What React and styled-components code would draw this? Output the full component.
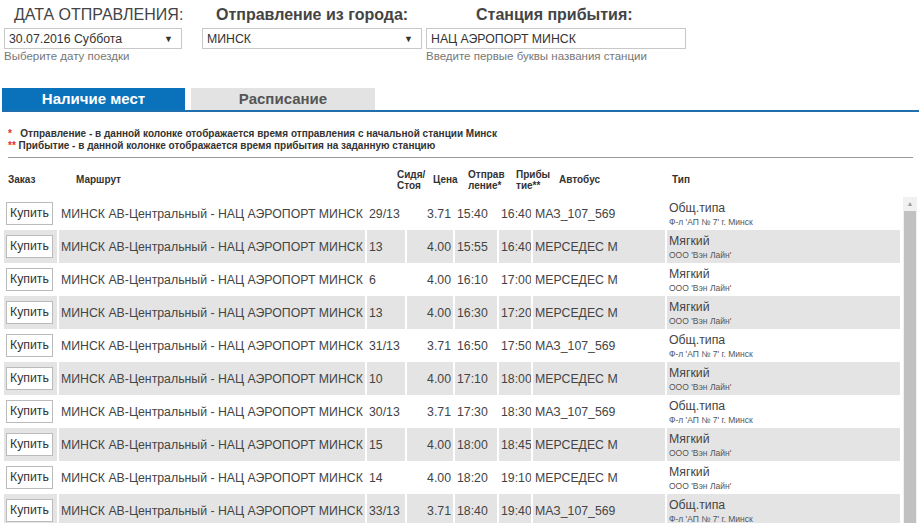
import React from 'react';
import styled, { createGlobalStyle } from 'styled-components';

const Global = createGlobalStyle`
  body { margin: 0; background: #fff; font-family: Arial, 'Liberation Sans', sans-serif; color: #333; }
`;

const Page = styled.div`
  width: 923px; height: 523px; overflow: hidden; position: relative;
`;

const Filters = styled.div`
  display: flex; padding: 4px 0 0 4px; height: 78px;
`;

const Field = styled.div`
  width: ${p => p.$w}px; margin-right: ${p => p.$mr}px;
  display: flex; flex-direction: column;
`;

const Label = styled.div`
  font-size: 16px; font-weight: ${p => (p.$bold ? 'bold' : 'normal')};
  color: #444; padding-left: ${p => p.$pl}px; height: 24px; line-height: 22px;
  white-space: nowrap;
`;

const Select = styled.div`
  height: 19px; border: 1px solid #c8c8c8; background: #fff;
  font-size: 12.3px; color: #333; padding: 0 8px 0 4px;
  display: flex; align-items: center; justify-content: space-between;
  span { font-size: 9px; }
`;

const Hint = styled.div`
  font-size: 11.5px; color: #777; margin-top: 1px; white-space: nowrap;
`;

const Tabs = styled.div`
  display: flex; margin: 6px 4px 0 2px; border-bottom: 2px solid #1f6fae; gap: 6px;
`;

const Tab = styled.div`
  width: ${p => p.$w}px; height: 22px; line-height: 22px; text-align: center;
  font-size: 15px; font-weight: bold;
  background: ${p => (p.$active ? '#0a72ba' : '#e3e3e3')};
  color: ${p => (p.$active ? '#fff' : '#555')};
`;

const Notes = styled.div`
  margin: 16px 10px 0 8px; padding-bottom: 5px; border-bottom: 1px solid #999;
  font-size: 10px; font-weight: bold; color: #333; line-height: 12px;
  b { color: #e03030; }
`;

const Head = styled.div`
  display: grid; grid-template-columns: 68px 321px 36px 35px 48px 43px 113px auto;
  margin: 6px 0 0 8px; height: 31px; align-items: center;
  font-size: 10px; font-weight: bold; color: #333; line-height: 11px;
`;

const Body = styled.div`
  display: flex; margin-top: 2px;
`;

const Rows = styled.div`
  width: 896px; margin-left: 4px;
`;

const Row = styled.div`
  display: grid; grid-template-columns: 53px 306px 38px 46px 42px 32px 132px 1fr;
  gap: 2px; height: 33px;
`;

const Cell = styled.div`
  background: ${p => (p.$gray ? '#e4e4e4' : '#fff')};
  display: flex; flex-direction: column; justify-content: center;
  align-items: ${p => (p.$right ? 'flex-end' : 'flex-start')};
  padding: 0 2px; font-size: 12.3px; color: #444; white-space: nowrap; overflow: hidden;
  small { font-size: 8.5px; color: #555; margin-top: 2px; }
`;

const Buy = styled.div`
  border: 1px solid #bbb; background: #fff; font-size: 12.3px; color: #333;
  height: 21px; line-height: 21px; padding: 0 3px;
`;

const Scroll = styled.div`
  width: 14px; margin-left: 3px; background: #f1f1f1; height: 340px;
  display: flex; flex-direction: column; align-items: center;
`;

const Arrow = styled.div`
  font-size: 7px; color: #a0a0a0; height: 14px; line-height: 14px;
`;

const Thumb = styled.div`
  width: 12px; flex: 1; background: #c1c1c1;
`;

const data = [
  ['29/13', '3.71', '15:40', '16:40', 'МАЗ_107_569', 'Общ.типа', "Ф-л 'АП № 7' г. Минск"],
  ['13', '4.00', '15:55', '16:40', 'МЕРСЕДЕС М', 'Мягкий', "ООО 'Вэн Лайн'"],
  ['6', '4.00', '16:10', '17:00', 'МЕРСЕДЕС М', 'Мягкий', "ООО 'Вэн Лайн'"],
  ['13', '4.00', '16:30', '17:20', 'МЕРСЕДЕС М', 'Мягкий', "ООО 'Вэн Лайн'"],
  ['31/13', '3.71', '16:50', '17:50', 'МАЗ_107_569', 'Общ.типа', "Ф-л 'АП № 7' г. Минск"],
  ['10', '4.00', '17:10', '18:00', 'МЕРСЕДЕС М', 'Мягкий', "ООО 'Вэн Лайн'"],
  ['30/13', '3.71', '17:30', '18:30', 'МАЗ_107_569', 'Общ.типа', "Ф-л 'АП № 7' г. Минск"],
  ['15', '4.00', '18:00', '18:45', 'МЕРСЕДЕС М', 'Мягкий', "ООО 'Вэн Лайн'"],
  ['14', '4.00', '18:20', '19:10', 'МЕРСЕДЕС М', 'Мягкий', "ООО 'Вэн Лайн'"],
  ['33/13', '3.71', '18:40', '19:40', 'МАЗ_107_569', 'Общ.типа', "Ф-л 'АП № 7' г. Минск"],
];

export default function App() {
  return (
    <Page>
      <Global />
      <Filters>
        <Field $w={178} $mr={20}>
          <Label $pl={10}>ДАТА ОТПРАВЛЕНИЯ:</Label>
          <Select>30.07.2016 Суббота<span>▼</span></Select>
          <Hint>Выберите дату поездки</Hint>
        </Field>
        <Field $w={220} $mr={4}>
          <Label $pl={14} $bold>Отправление из города:</Label>
          <Select>МИНСК<span>▼</span></Select>
        </Field>
        <Field $w={260} $mr={0}>
          <Label $pl={50} $bold>Станция прибытия:</Label>
          <Select>НАЦ АЭРОПОРТ МИНСК</Select>
          <Hint>Введите первые буквы названия станции</Hint>
        </Field>
      </Filters>
      <Tabs>
        <Tab $active $w={183}>Наличие мест</Tab>
        <Tab $w={184}>Расписание</Tab>
      </Tabs>
      <Notes>
        <div><b>*</b>&nbsp;&nbsp; Отправление - в данной колонке отображается время отправления с начальной станции Минск</div>
        <div><b>**</b> Прибытие - в данной колонке отображается время прибытия на заданную станцию</div>
      </Notes>
      <Head>
        <div>Заказ</div>
        <div>Маршрут</div>
        <div>Сидя/<br />Стоя</div>
        <div>Цена</div>
        <div>Отправ<br />ление*</div>
        <div>Прибы<br />тие**</div>
        <div>Автобус</div>
        <div>Тип</div>
      </Head>
      <Body>
        <Rows>
          {data.map((r, i) => {
            const g = i % 2 === 1;
            return (
              <Row key={i}>
                <Cell $gray={g}><Buy>Купить</Buy></Cell>
                <Cell $gray={g}>МИНСК АВ-Центральный - НАЦ АЭРОПОРТ МИНСК</Cell>
                <Cell $gray={g}>{r[0]}</Cell>
                <Cell $gray={g} $right>{r[1]}</Cell>
                <Cell $gray={g}>{r[2]}</Cell>
                <Cell $gray={g}>{r[3]}</Cell>
                <Cell $gray={g}>{r[4]}</Cell>
                <Cell $gray={g}>{r[5]}<small>{r[6]}</small></Cell>
              </Row>
            );
          })}
        </Rows>
        <Scroll>
          <Arrow>▲</Arrow>
          <Thumb />
        </Scroll>
      </Body>
    </Page>
  );
}
